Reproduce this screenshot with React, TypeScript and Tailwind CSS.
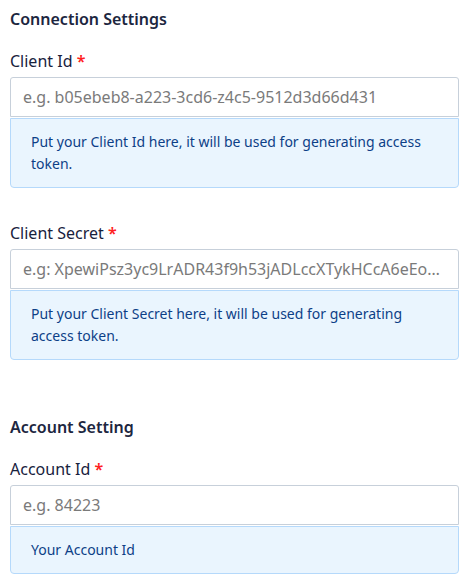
import React from "react";

function Field({ label, placeholder, help }: { label: string; placeholder: string; help: string }) {
  return (
    <div className="flex flex-col">
      <label className="text-[16px] leading-[24px] font-normal text-[#18223d] mb-[4px]">
        {label} <span className="text-[#ff2020] font-semibold">*</span>
      </label>
      <input
        className="h-[40px] w-full border border-[#c7d0da] rounded-t-[3px] bg-white px-[12px] text-[16px] text-[#333] placeholder:text-[#7a7a7a] outline-none truncate"
        placeholder={placeholder}
      />
      <div className="mt-px border border-[#b5d9fb] bg-[#eaf5fe] rounded-b-[4px] px-[20px] py-[12px] text-[14px] leading-[22px] text-[#0d3f87]">
        {help}
      </div>
    </div>
  );
}

export default function App() {
  return (
    <div className="bg-white w-[470px] min-h-[583px] pl-[10px] pr-[11px] pt-[7px]" style={{ fontFamily: '"Noto Sans", sans-serif' }}>
      <h2 className="text-[16px] leading-[24px] font-semibold text-[#1c2640] mb-[18px]">Connection Settings</h2>
      <div className="flex flex-col gap-[33px]">
        <Field
          label="Client Id"
          placeholder="e.g. b05ebeb8-a223-3cd6-z4c5-9512d3d66d431"
          help="Put your Client Id here, it will be used for generating access token."
        />
        <Field
          label="Client Secret"
          placeholder="e.g: XpewiPsz3yc9LrADR43f9h53jADLccXTykHCcA6eEo7eXQkZ5Vf2"
          help="Put your Client Secret here, it will be used for generating access token."
        />
      </div>
      <h2 className="mt-[55px] text-[16px] leading-[24px] font-semibold text-[#1c2640] mb-[18px]">Account Setting</h2>
      <Field label="Account Id" placeholder="e.g. 84223" help="Your Account Id" />
    </div>
  );
}
